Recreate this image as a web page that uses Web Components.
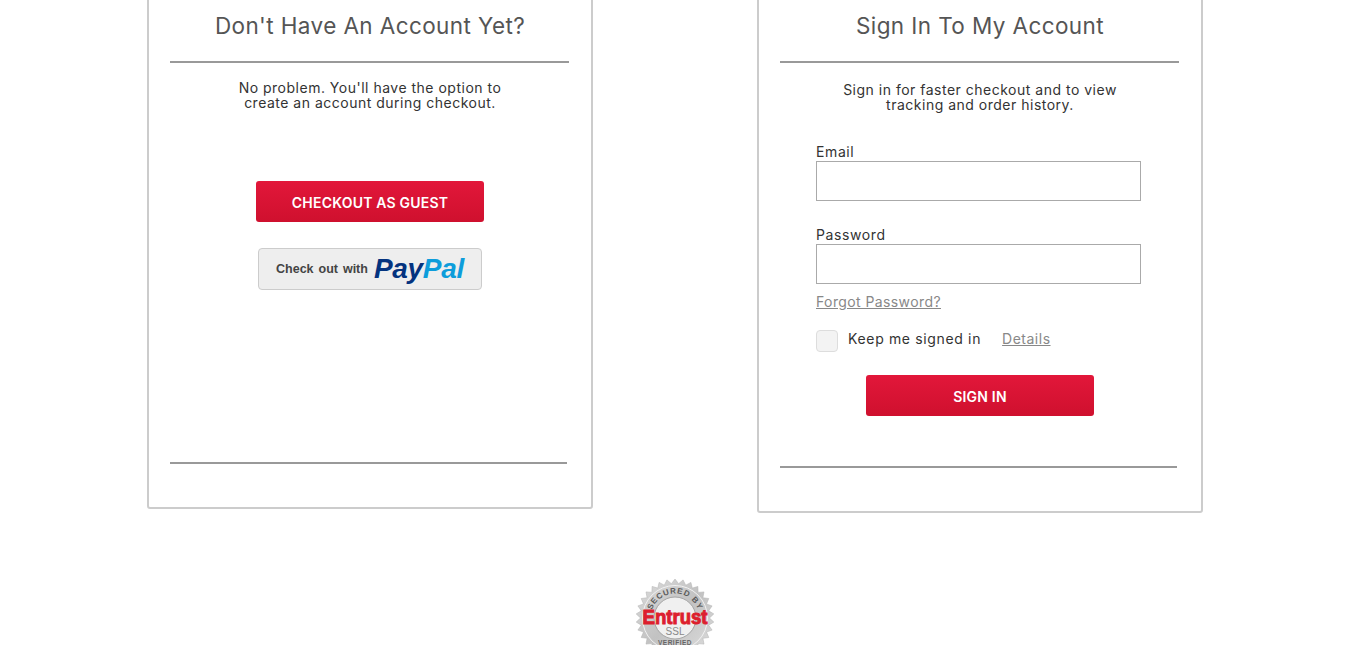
<!DOCTYPE html>
<html lang="en">
<head>
<meta charset="utf-8">
<title>Checkout</title>
<style>
  html, body { margin: 0; height: 100%; overflow: hidden; background: #fff; }
  body { font-family: Inter, "Liberation Sans", sans-serif; color: #333; }
</style>
</head>
<body>
<checkout-page>
  <account-card slot="left" heading="Don't Have An Account Yet?" style="--intro-top:17px;--bottom-rule:397px;--card-end:43px;--after-intro:71px">
    <span slot="intro">No problem. You'll have the option to<br>create an account during checkout.</span>
    <guest-panel></guest-panel>
  </account-card>
  <account-card slot="right" heading="Sign In To My Account" style="--intro-top:19px;--bottom-rule:397px;--card-end:43px;--after-intro:1px">
    <span slot="intro">Sign in for faster checkout and to view<br>tracking and order history.</span>
    <signin-form></signin-form>
  </account-card>
</checkout-page>

<script>
class CheckoutPage extends HTMLElement {
    constructor() {
        super();
        this.attachShadow({ mode: 'open' }).innerHTML = `
            <style>
                :host { display: block; margin-top: -10px; }
                .cards { display: flex; align-items: flex-start; gap: 164px; padding-left: 147px; }
                .seal { display: flex; justify-content: center; margin-top: 66px; }
            </style>
            <div class="cards">
                <slot name="left"></slot>
                <slot name="right"></slot>
            </div>
            <div class="seal"><entrust-seal></entrust-seal></div>
        `;
    }
}
customElements.define('checkout-page', CheckoutPage);

class AccountCard extends HTMLElement {
    constructor() {
        super();
        this.attachShadow({ mode: 'open' });
    }

    connectedCallback() {
        this.shadowRoot.innerHTML = `
            <style>
                :host {
                    display: block;
                    box-sizing: border-box;
                    width: 446px;
                    border: 2px solid #ccc;
                    border-radius: 3px;
                    padding: 0 21px var(--card-end);
                }
                h2 {
                    margin: 0;
                    padding: 20px 0 21px;
                    font: 400 22.5px/28px Inter, "Liberation Sans", sans-serif;
                    letter-spacing: .4px;
                    color: #555;
                    text-align: center;
                }
                .rule { height: 2px; background: #999; width: 399px; }
                .rule.end { width: var(--bottom-rule); }
                .intro {
                    margin-top: var(--intro-top);
                    margin-bottom: 1px;
                    font-size: 14px;
                    line-height: 15px;
                    text-align: center;
                    color: #333;
                    letter-spacing: .5px;
                }
            </style>
            <h2>${this.getAttribute('heading')}</h2>
            <div class="rule"></div>
            <div class="intro"><slot name="intro"></slot></div>
            <slot></slot>
            <div class="rule end"></div>
        `;
    }
}
customElements.define('account-card', AccountCard);

class RedButton extends HTMLElement {
    constructor() {
        super();
        this.attachShadow({ mode: 'open' }).innerHTML = `
            <style>
                :host {
                    display: flex;
                    align-items: center;
                    justify-content: center;
                    box-sizing: border-box;
                    width: 228px;
                    height: 41px;
                    padding-top: 1px;
                    border-radius: 3px;
                    background: linear-gradient(#e2173a, #cf102e);
                    color: #fff;
                    font: 600 14px Inter, "Liberation Sans", sans-serif;
                    letter-spacing: .2px;
                    cursor: pointer;
                }
            </style>
            <slot></slot>
        `;
    }
}
customElements.define('red-button', RedButton);

class PaypalButton extends HTMLElement {
    constructor() {
        super();
        this.attachShadow({ mode: 'open' }).innerHTML = `
            <style>
                :host {
                    display: flex;
                    align-items: center;
                    justify-content: center;
                    box-sizing: border-box;
                    width: 224px;
                    height: 42px;
                    gap: 6px;
                    border: 1px solid #ccc;
                    border-radius: 4px;
                    background: #eee;
                    cursor: pointer;
                }
                .with { font: 700 12.5px "Liberation Sans", Arial, sans-serif; color: #444; word-spacing: 1.5px; }
                .logo { font: italic 700 28px/30px "Liberation Sans", Arial, sans-serif; letter-spacing: -.3px; }
                .pay { color: #04337f; }
                .pal { color: #0d9ddb; }
            </style>
            <span class="with">Check out with</span>
            <span class="logo"><span class="pay">Pay</span><span class="pal">Pal</span></span>
        `;
    }
}
customElements.define('paypal-button', PaypalButton);

class GuestPanel extends HTMLElement {
    constructor() {
        super();
        this.attachShadow({ mode: 'open' }).innerHTML = `
            <style>
                :host {
                    display: flex;
                    flex-direction: column;
                    align-items: center;
                    padding: 70px 0 172px;
                    gap: 26px;
                }
            </style>
            <red-button>CHECKOUT AS GUEST</red-button>
            <paypal-button></paypal-button>
        `;
    }
}
customElements.define('guest-panel', GuestPanel);

class TextField extends HTMLElement {
    constructor() {
        super();
        this.attachShadow({ mode: 'open' });
    }

    connectedCallback() {
        const type = this.getAttribute('type') || 'text';
        this.shadowRoot.innerHTML = `
            <style>
                :host { display: block; }
                label { display: block; font-size: 14px; line-height: 16px; color: #333; letter-spacing: .6px; }
                input {
                    display: block;
                    box-sizing: border-box;
                    width: 325px;
                    height: 40px;
                    margin: 1px 0 0;
                    padding: 0 8px;
                    border: 1px solid #aaa;
                    border-radius: 0;
                    outline: none;
                    background: #fff;
                }
            </style>
            <label>${this.getAttribute('label')}</label>
            <input type="${type}">
        `;
    }
}
customElements.define('text-field', TextField);

class SigninForm extends HTMLElement {
    constructor() {
        super();
        this.attachShadow({ mode: 'open' }).innerHTML = `
            <style>
                :host {
                    display: block;
                    padding: 31px 0 50px 36px;
                    font-size: 14px;
                    color: #333;
                }
                text-field + text-field { margin-top: 26px; }
                a { color: #888; text-decoration: underline; }
                .forgot { margin-top: 10px; line-height: 16px; letter-spacing: .4px; }
                .keep { display: flex; align-items: flex-start; margin-top: 20px; height: 22px; line-height: 18px; letter-spacing: .65px; }
                .box {
                    box-sizing: border-box;
                    width: 22px;
                    height: 22px;
                    margin-right: 10px;
                    border: 1px solid #ddd;
                    border-radius: 4px;
                    background: #f3f3f3;
                }
                .keep a { margin-left: 21px; letter-spacing: .5px; }
                .submit { margin: 23px 0 0 50px; }
            </style>
            <text-field label="Email" type="email"></text-field>
            <text-field label="Password" type="password"></text-field>
            <div class="forgot"><a href="#">Forgot Password?</a></div>
            <div class="keep">
                <div class="box"></div>
                <span>Keep me signed in</span>
                <a href="#">Details</a>
            </div>
            <red-button class="submit">SIGN IN</red-button>
        `;
    }
}
customElements.define('signin-form', SigninForm);

class EntrustSeal extends HTMLElement {
    constructor() {
        super();
        const pts = [];
        const teeth = 30;
        for (let i = 0; i < teeth * 2; i++) {
            const r = i % 2 ? 34.5 : 39;
            const a = Math.PI * i / teeth;
            pts.push((39 + r * Math.sin(a)).toFixed(1) + ',' + (39 - r * Math.cos(a)).toFixed(1));
        }
        this.attachShadow({ mode: 'open' }).innerHTML = `
            <style>
                :host { display: block; width: 78px; height: 78px; }
                svg { display: block; }
            </style>
            <svg width="78" height="78" viewBox="0 0 78 78">
                <defs>
                    <linearGradient id="metal" x1="0" y1="0" x2="1" y2="1">
                        <stop offset="0" stop-color="#dcdcdc"/>
                        <stop offset=".5" stop-color="#c2c2c2"/>
                        <stop offset="1" stop-color="#dedede"/>
                    </linearGradient>
                    <path id="top-arc" d="M14.5 39a24.500 24.500 0 0 1 49 0"/>
                </defs>
                <polygon points="${pts.join(' ')}" fill="url(#metal)" stroke="#b0b0b0" stroke-width=".5"/>
                <circle cx="39" cy="39" r="32.500" fill="none" stroke="#f2f2f2" stroke-width="1"/>
                <circle cx="39" cy="39" r="21" fill="#f0f0f0" stroke="#a5a5a5" stroke-width="1"/>
                <text font-family="Liberation Sans, Arial, sans-serif" font-size="8" font-weight="700" fill="#5a5a5a" letter-spacing=".8">
                    <textPath href="#top-arc" startOffset="50%" text-anchor="middle">SECURED BY</textPath>
                </text>
                <text x="39" y="45" text-anchor="middle" font-family="Liberation Sans, Arial, sans-serif" font-size="20" font-weight="700" fill="#dd1f2e" stroke="#dd1f2e" stroke-width="1" textLength="65" lengthAdjust="spacingAndGlyphs">Entrust</text>
                <text x="39" y="56" text-anchor="middle" font-family="Liberation Sans, Arial, sans-serif" font-size="10" fill="#8a8a8a">SSL</text>
                <text x="39" y="66" text-anchor="middle" font-family="Liberation Sans, Arial, sans-serif" font-size="6.500" font-weight="700" fill="#666" letter-spacing=".5">VERIFIED</text>
            </svg>
        `;
    }
}
customElements.define('entrust-seal', EntrustSeal);
</script>
</body>
</html>
